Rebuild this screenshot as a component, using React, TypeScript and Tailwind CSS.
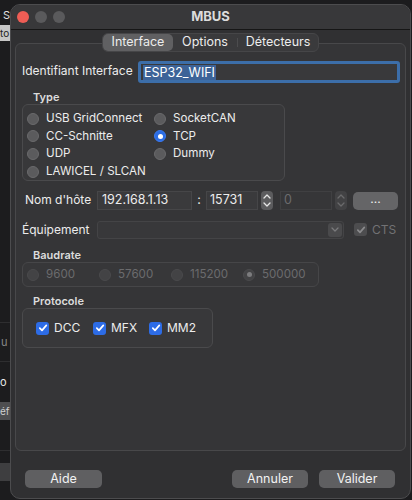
import React from 'react';

const font = { fontFamily: 'Inter, "Liberation Sans", sans-serif' };

function Radio({ label, checked, disabled, tall }: { label: string; checked?: boolean; disabled?: boolean; tall?: boolean }) {
  let circle = 'bg-[#5b5b5d] border border-[#6a6a6c]';
  if (checked && !disabled) circle = 'bg-[#2b6de5] border border-[#3b7af0]';
  if (disabled) circle = 'bg-[#434345] border border-[#4a4a4c]';
  return (
    <div className={`flex items-center ${tall ? 'h-[17.6px]' : 'h-[17px]'}`}>
      <span className={`w-[12px] h-[12px] rounded-full flex items-center justify-center shrink-0 ${circle}`}>
        {checked && <span className={`w-[5px] h-[5px] rounded-full ${disabled ? 'bg-[#7c7c7e]' : 'bg-white'}`} />}
      </span>
      <span className={`ml-[7px] text-[11.6px] leading-none ${disabled ? 'text-[#6b6b6d]' : 'text-[#ececec]'}`}>{label}</span>
    </div>
  );
}

function Check({ label, disabled }: { label: string; disabled?: boolean }) {
  return (
    <div className="flex items-center">
      <span
        className={`w-[13px] h-[13px] rounded-[3px] flex items-center justify-center shrink-0 ${
          disabled ? 'bg-[#4d4d4f]' : 'bg-[#2d6ce6]'
        }`}
      >
        <svg width="10" height="10" viewBox="0 0 10 10">
          <path d="M1.8 5.2 L4 7.4 L8.3 2.4" fill="none" stroke={disabled ? '#8a8a8c' : '#ffffff'} strokeWidth="1.7" strokeLinecap="round" strokeLinejoin="round" />
        </svg>
      </span>
      <span className={`ml-[5px] text-[12px] leading-none ${disabled ? 'text-[#727274]' : 'text-[#ececec]'}`}>{label}</span>
    </div>
  );
}

function Stepper({ disabled }: { disabled?: boolean }) {
  const c = disabled ? '#6a6a6c' : '#e6e6e6';
  return (
    <div className={`w-[12px] h-[19px] rounded-[4px] flex flex-col items-center justify-center gap-[3px] ${disabled ? 'bg-[#424244]' : 'bg-[#5c5c5e]'}`}>
      <svg width="8" height="5" viewBox="0 0 8 5">
        <path d="M1 4 L4 1 L7 4" fill="none" stroke={c} strokeWidth="1.3" strokeLinecap="round" strokeLinejoin="round" />
      </svg>
      <svg width="8" height="5" viewBox="0 0 8 5">
        <path d="M1 1 L4 4 L7 1" fill="none" stroke={c} strokeWidth="1.3" strokeLinecap="round" strokeLinejoin="round" />
      </svg>
    </div>
  );
}

function Button({ label, w }: { label: string; w: string }) {
  return (
    <div className={`${w} h-[18px] rounded-[5px] bg-[#5f5f61] flex items-center justify-center text-[12.5px] text-[#f2f2f2]`}>
      {label}
    </div>
  );
}

export default function App() {
  return (
    <div className="w-[412px] h-[500px] overflow-hidden bg-[#1c1c1e] flex" style={font}>
      {/* bits of the window behind */}
      <div className="w-[10px] shrink-0 flex flex-col overflow-hidden">
        <div className="h-[25px] flex items-center pl-[3px] pt-[6px] text-[11px] text-[#e0e0e0]">S</div>
        <div className="h-[16px] bg-[#c6c6c6] flex items-center text-[10px] text-[#222]">to</div>
        <div className="h-[281px]" />
        <div className="h-[1px] bg-[#2e2e30]" />
        <div className="h-[38px] flex items-center text-[11px] text-[#8a8a8a] pl-[1px]">u</div>
        <div className="h-[1px] bg-[#2e2e30]" />
        <div className="h-[40px] flex items-center text-[11px] text-[#e8e8e8]">o</div>
        <div className="h-[18px] bg-[#4e4e50] flex items-center text-[10px] text-[#d0d0d0]">éf</div>
        <div className="h-[30px]" />
        <div className="h-[1px] bg-[#2e2e30]" />
        <div className="h-[12px]" />
        <div className="h-[18px] bg-[#3e3e40]" />
      </div>

      {/* dialog */}
      <div className="mt-[4px] w-[401px] h-[495px] shrink-0 rounded-[10px] border border-[#4c4c4e] bg-[#303032] flex flex-col overflow-hidden">
        {/* title bar */}
        <div className="h-[25px] shrink-0 bg-[#38383a] border-b border-[#161616] flex items-center">
          <div className="flex items-center gap-[6px] pl-[6px]">
            <span className="w-[12px] h-[12px] rounded-full bg-[#ee5d55]" />
            <span className="w-[12px] h-[12px] rounded-full bg-[#5a5a5c]" />
            <span className="w-[12px] h-[12px] rounded-full bg-[#5a5a5c]" />
          </div>
          <div className="flex-1 text-center text-[13px] font-bold text-[#dcdcdc] pr-[54px]">MBUS</div>
        </div>

        {/* tabs */}
        <div className="flex justify-center mt-[3px] relative z-10">
          <div className="flex h-[19px] rounded-[6px] bg-[#3a3a3c] border border-[#464648] text-[12.5px] text-[#ececec]">
            <div className="w-[70px] rounded-[5px] bg-[#606062] flex items-center justify-center">Interface</div>
            <div className="w-[65px] flex items-center justify-center border-r border-[#4c4c4e] my-[4px]">Options</div>
            <div className="w-[80px] flex items-center justify-center">Détecteurs</div>
          </div>
        </div>

        {/* panel */}
        <div className="mx-[4px] -mt-[9px] h-[408px] shrink-0 rounded-[6px] border border-[#48484a] bg-[#353537] pl-[6px] pr-[5px] pt-[17px] flex flex-col">
          {/* Identifiant */}
          <div className="flex items-center h-[22px]">
            <span className="w-[116px] text-[12px] text-[#ececec] pb-[3px]">Identifiant Interface</span>
            <div className="flex-1 h-[22px] rounded-[3px] border-[3px] border-[#3c6ea9] bg-[#39393b] flex items-center pl-[2px]">
              <span className="bg-[#3d6398] text-[12.5px] text-white px-[1px] leading-[15px]">ESP32_WIFI</span>
            </div>
          </div>

          {/* Type */}
          <div className="mt-[8px] h-[13px] pl-[11px] text-[11px] font-semibold text-[#dcdcdc] leading-[13px]">Type</div>
          <div className="w-[263px] h-[77px] rounded-[6px] border border-[#4a4a4c] bg-[#38383a] pl-[4px] pt-[5px] grid grid-cols-[127px_1fr]">
            <div className="flex flex-col">
              <Radio label="USB GridConnect" tall />
              <Radio label="CC-Schnitte" tall />
              <Radio label="UDP" tall />
              <Radio label="LAWICEL / SLCAN" tall />
            </div>
            <div className="flex flex-col">
              <Radio label="SocketCAN" tall />
              <Radio label="TCP" checked tall />
              <Radio label="Dummy" tall />
            </div>
          </div>

          {/* Nom d'hôte */}
          <div className="mt-[10px] h-[19px] flex items-center">
            <span className="w-[75px] pl-[3px] text-[12px] text-[#ececec] pb-[2px]">Nom d'hôte</span>
            <div className="w-[95px] h-[19px] bg-[#3a3a3c] border border-[#464648] flex items-center pl-[4px] text-[12.5px] text-[#ececec]">192.168.1.13</div>
            <span className="w-[14px] text-center text-[12.5px] text-[#ececec]">:</span>
            <div className="w-[52px] h-[19px] bg-[#3a3a3c] border border-[#464648] flex items-center pl-[3px] text-[12.5px] text-[#ececec]">15731</div>
            <div className="ml-[3px]"><Stepper /></div>
            <div className="ml-[7px] w-[52px] h-[19px] bg-[#363638] border border-[#404042] flex items-center pl-[3px] text-[12.5px] text-[#6b6b6d]">0</div>
            <div className="ml-[3px]"><Stepper disabled /></div>
            <div className="ml-[6px]">
              <div className="w-[45px] h-[18px] rounded-[5px] bg-[#656567] flex items-center justify-center text-[12px] text-[#f2f2f2] pb-[4px]">...</div>
            </div>
          </div>

          {/* Équipement */}
          <div className="mt-[10px] h-[19px] flex items-center">
            <span className="w-[75px] text-[12px] text-[#ececec]">Équipement</span>
            <div className="w-[247px] h-[18px] bg-[#38383a] border border-[#444446] rounded-[3px] flex items-center justify-end pr-[1px]">
              <div className="w-[14px] h-[14px] rounded-[3px] bg-[#4a4a4c] flex items-center justify-center">
                <svg width="8" height="5" viewBox="0 0 8 5">
                  <path d="M1 1 L4 4 L7 1" fill="none" stroke="#7a7a7c" strokeWidth="1.3" strokeLinecap="round" strokeLinejoin="round" />
                </svg>
              </div>
            </div>
            <div className="ml-[10px]"><Check label="CTS" disabled /></div>
          </div>

          {/* Baudrate */}
          <div className="mt-[10px] h-[13px] pl-[11px] text-[11px] font-semibold text-[#dcdcdc] leading-[13px]">Baudrate</div>
          <div className="w-[297px] h-[25px] rounded-[6px] border border-[#464648] bg-[#373739] pl-[4px] grid grid-cols-[72px_72px_72px_1fr] items-center">
            <Radio label="9600" disabled />
            <Radio label="57600" disabled />
            <Radio label="115200" disabled />
            <Radio label="500000" checked disabled />
          </div>

          {/* Protocole */}
          <div className="mt-[8px] h-[13px] pl-[11px] text-[11px] font-semibold text-[#dcdcdc] leading-[13px]">Protocole</div>
          <div className="w-[191px] h-[40px] rounded-[6px] border border-[#4a4a4c] bg-[#38383a] pl-[13px] flex items-center">
            <div className="w-[57px]"><Check label="DCC" /></div>
            <div className="w-[56px]"><Check label="MFX" /></div>
            <Check label="MM2" />
          </div>
        </div>

        {/* buttons */}
        <div className="mt-[19px] flex items-center pl-[14px] pr-[15px]">
          <Button label="Aide" w="w-[77px]" />
          <div className="flex-1" />
          <Button label="Annuler" w="w-[76px]" />
          <div className="ml-[11px]">
            <Button label="Valider" w="w-[76px]" />
          </div>
        </div>
      </div>
    </div>
  );
}
